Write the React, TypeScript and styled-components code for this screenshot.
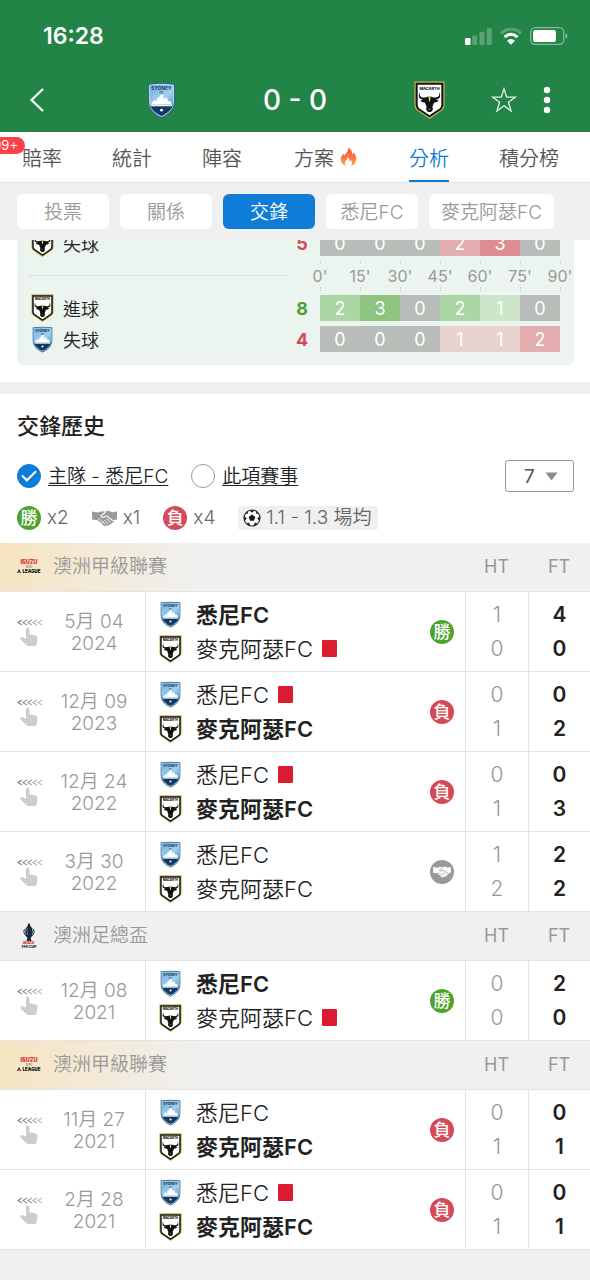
import React, { useState } from 'react';
import styled, { createGlobalStyle } from 'styled-components';

const GlobalStyle = createGlobalStyle`
  *, *::before, *::after { box-sizing: border-box; }
  body {
    margin: 0;
    background: #f0f0f0;
    color: #222;
    font-family: Inter, "Noto Sans CJK TC", sans-serif;
  }
  button, select, input { font: inherit; margin: 0; }
  button { border: 0; padding: 0; background: none; color: inherit; cursor: pointer; }
  svg { display: block; flex: none; }
`;

/* ---------- drawings ---------- */

const SydneyCrest = ({ width, height }: { width: number; height: number }) => (
  <svg width={width} height={height} viewBox="0 0 30 38" aria-hidden="true">
    <defs>
      <linearGradient id="sky" x1="0" y1="0" x2="1" y2="1">
        <stop offset="0" stopColor="#6db1e0" />
        <stop offset="0.6" stopColor="#a3d0ef" />
        <stop offset="1" stopColor="#5a9fd4" />
      </linearGradient>
    </defs>
    <path d="M1 2Q15-.5 29 2V20C29 29 22 34 15 37.5C8 34 1 29 1 20Z" fill="#2c5c88" />
    <path d="M2 2.8Q15 .6 28 2.8V20C28 28.4 21.500 33.200 15 36.400C8.500 33.200 2 28.400 2 20Z" fill="#b9d6ea" />
    <path d="M3 3.600Q15 1.600 27 3.600V25H3Z" fill="url(#sky)" />
    <path d="M3.200 23.500H26.800C25.500 29 20.500 32.400 15 35.200C9.500 32.400 4.500 29 3.200 23.500Z" fill="#12395f" />
    <path d="M4.500 23C5 20.500 7 19 8.500 18.500C8.500 19.300 9 19.800 9.500 20C9.500 17.500 11 16 13 15.300C13 13.500 15 12.300 17 12C16.500 14 17 16 18 17.500C18.500 16.500 19.500 16 21 15.800C20.500 17.500 21.500 19 22.500 20C23 19.600 23.500 19.500 24.500 19.500C24.500 21 25 22.300 25.500 23Z" fill="#fff" />
    <path d="M4 23H26V25H4Z" fill="#e6f2fa" />
    <circle cx="15" cy="29" r="1.500" fill="#fff" />
    <text x="15" y="8.600" fontSize="5" fontWeight="700" textAnchor="middle" fill="#163b5e">SYDNEY</text>
    <text x="15" y="12" fontSize="3" fontWeight="700" textAnchor="middle" fill="#163b5e">FC</text>
  </svg>
);

const MacarthurCrest = ({ width, height }: { width: number; height: number }) => (
  <svg width={width} height={height} viewBox="0 0 32 39" aria-hidden="true">
    <path d="M.500 .500H31.500V25Q31.500 28 29 30L16 39L3 30Q.500 28 .500 25Z" fill="#cdb64f" />
    <path d="M1.700 1.700H30.300V25Q30.300 27.500 28.200 29.200L16 37.500L3.800 29.200Q1.700 27.500 1.700 25Z" fill="#151515" />
    <path d="M3.800 3.800H28.200V24.500Q28.200 26.700 26.700 27.900L16 35.200L5.300 27.900Q3.800 26.700 3.800 24.500Z" fill="#fff" />
    <text x="16" y="8.800" fontSize="4" fontWeight="800" textAnchor="middle" fill="#151515">MACARTH</text>
    <path d="M6.500 11C4.500 16 8 17.500 12 16.800Q13.500 16 16 16T20 16.800C24 17.500 27.500 16 25.500 11C29 16 26 19 22.500 19L25.500 20Q23.500 22.500 20.800 22L19 26.500L19.500 29.500L17.500 32H14.500L12.500 29.500L13 26.500L11.200 22Q8.500 22.500 6.500 20L9.500 19C6 19 3 16 6.500 11Z" fill="#111" />
    <path d="M14.800 15.500H17.200L16.500 21H15.500Z" fill="#e2cb79" />
    <path d="M14.300 28.500H17.700L16 30Z" fill="#777" />
  </svg>
);

const ALeagueLogo = () => (
  <svg width="24" height="16" viewBox="0 0 24 16" aria-hidden="true">
    <text x="12" y="5" fontSize="5.500" fontWeight="900" textAnchor="middle" fill="#dd3433">ISUZU</text>
    <text x="12" y="8.500" fontSize="3" fontWeight="600" textAnchor="middle" fill="#666">UTE</text>
    <path d="M0 14L2 10L4 14H2.800L2 12L1.200 14Z" fill="#151515" />
    <text x="14.500" y="14" fontSize="4.500" fontWeight="900" textAnchor="middle" fill="#151515">LEAGUE</text>
  </svg>
);

const CupLogo = () => (
  <svg width="24" height="26" viewBox="0 0 24 26" aria-hidden="true">
    <path d="M11 1Q12-.500 13 1L13.400 3Q16 5 15.800 9Q15.500 13 13.600 15L14.500 18H9.500L10.400 15Q8.500 13 8.200 9Q8 5 10.600 3Z" fill="#1b2b3d" />
    <path d="M8.300 6Q6.200 6.500 7 9.500Q7.500 12 9.500 13M15.700 6Q17.800 6.500 17 9.500Q16.500 12 14.500 13" fill="none" stroke="#1b2b3d" strokeWidth="1" />
    <path d="M10.500 5Q9.500 8 10.700 12" stroke="#56738c" fill="none" />
    <text x="11.500" y="21" fontSize="4" fontWeight="900" fontStyle="italic" textAnchor="middle" fill="#d8333a">Isuzu</text>
    <text x="12" y="25" fontSize="3.500" fontWeight="900" textAnchor="middle" fill="#1b2b3d">FFA CUP</text>
  </svg>
);

const SwipeHand = () => (
  <svg width="26" height="28" viewBox="0 0 26 28" aria-hidden="true">
    <g fill="none" strokeWidth="1.300">
      <path d="M5 1L1 3.500L5 6" stroke="#8f8f8f" />
      <path d="M10 1L6 3.500L10 6" stroke="#9a9a9a" />
      <path d="M15 1L11 3.500L15 6" stroke="#a6a6a6" />
      <path d="M20 1L16 3.500L20 6" stroke="#b4b4b4" />
      <path d="M25 1L21 3.500L25 6" stroke="#c2c2c2" />
    </g>
    <path d="M9 10.500Q9 8.500 10.700 8.500T12.400 10.500V15.200L18.700 16.400Q20.700 16.900 20.500 19L19.800 24.500Q19.500 27 17.500 27H11.500Q10 27 9 25.800L3.500 20.200Q3 19.300 4 18.500Q5 17.800 6.200 18.300L9 19.800Z" fill="#cdcdcd" />
  </svg>
);

const Handshake = ({ width, height, color, line }: { width: number; height: number; color: string; line: string }) => (
  <svg width={width} height={height} viewBox="0 0 25 17" aria-hidden="true">
    <path d="M0 1.500L6 2.500L10 1.200L13 1.800L16.500.700L20 2.300L25 1.500V9.500L22 10Q22.500 12.300 20.300 12.500Q19.800 14.500 17.800 14.200Q16.800 16 15 15.200Q13.500 16.800 11.800 15.500L5.500 10.200L0 9.500Z" fill={color} />
    <path d="M13.500 2.300L9 5.800Q9.300 8 12 7L14.500 5.800L21.500 11" fill="none" stroke={line} strokeWidth="1.100" />
    <path d="M14.500 8.500L18.500 12M12.500 10L16 13.500M10.500 11.500L13.500 14.500" fill="none" stroke={line} strokeWidth="0.900" />
    <path d="M5.200 10.500L8 8.300M6.800 12.500L9.800 9.800M9 14L11.500 11.500" fill="none" stroke={line} strokeWidth="0.800" />
  </svg>
);

const FootballIcon = () => (
  <svg width="18" height="18" viewBox="0 0 18 18" aria-hidden="true">
    <circle cx="9" cy="9" r="8" fill="#fff" stroke="#333" strokeWidth="1.200" />
    <path d="M9 5.600L12.300 8L11 11.800H7L5.700 8Z" fill="#1c1c1c" />
    <path d="M5.800 1.300H12.200L9 3.600ZM17.300 7L16.500 12.300L14.200 9.200ZM.700 7L1.500 12.300L3.800 9.200ZM15.800 4.500L13 2L13.200 4.800ZM2.200 4.500L5 2L4.800 4.800ZM14.800 14.700L10.500 17L11.900 13.600ZM3.200 14.700L7.500 17L6.100 13.600Z" fill="#1c1c1c" />
  </svg>
);

const FireIcon = () => (
  <svg width="17" height="20" viewBox="0 0 17 20" aria-hidden="true">
    <defs>
      <linearGradient id="flame" x1="0" y1="0" x2="0" y2="1">
        <stop offset="0" stopColor="#f9564f" />
        <stop offset="0.6" stopColor="#fb7a45" />
        <stop offset="1" stopColor="#fdb13c" />
      </linearGradient>
    </defs>
    <path d="M8.200.500C11.500 2.500 12.300 5 12.300 7.500Q13.300 6.800 13.600 5.200C15.500 7.500 16.500 10 16.200 12.500C16 15.500 14.200 17.800 11.200 19C12.500 16.800 12.200 14.500 10.500 13Q10.300 14 9.500 14.500Q9.600 11.500 7.800 10C7.500 12.200 5 13.500 5 16Q5 17.700 6.200 19C3 18 .800 15.800 .700 12.500C.600 10 2 8.300 3 6.500Q3.500 7.500 4.300 8.200C6 6.200 8.800 4.200 8.200.500Z" fill="url(#flame)" />
  </svg>
);

const BackIcon = () => (
  <svg width="16" height="26" viewBox="0 0 16 26" aria-hidden="true">
    <path d="M14 2L2.500 13L14 24" fill="none" stroke="#fff" strokeWidth="2.200" />
  </svg>
);

const StarIcon = () => (
  <svg width="26" height="26" viewBox="0 0 26 26" aria-hidden="true">
    <path d="M13 1.800L15.700 10.100H24.500L17.400 15.200L20.100 24L13 18.700L5.900 24L8.600 15.200L1.500 10.100H10.300Z" fill="none" stroke="#e4f1e8" strokeWidth="1.300" />
  </svg>
);

const DotsIcon = () => (
  <svg width="8" height="28" viewBox="0 0 8 28" fill="#fff" aria-hidden="true">
    <circle cx="4" cy="4" r="3.200" />
    <circle cx="4" cy="14" r="3.200" />
    <circle cx="4" cy="24" r="3.200" />
  </svg>
);

const SignalIcon = () => (
  <svg width="27" height="17" viewBox="0 0 27 17" fill="#fff" aria-hidden="true">
    <rect x="0" y="10" width="5.500" height="7" rx="1.200" />
    <g opacity="0.25">
      <rect x="7.200" y="7.500" width="5" height="9.500" rx="1.200" />
      <rect x="14.500" y="4" width="5" height="13" rx="1.200" />
      <rect x="21.800" y="0" width="5" height="17" rx="1.200" />
    </g>
  </svg>
);

const WifiIcon = () => (
  <svg width="22" height="17" viewBox="0 0 22 17" aria-hidden="true">
    <path d="M1 5.300Q11-3.500 21 5.300" fill="none" stroke="#fff" strokeOpacity="0.25" strokeWidth="3" />
    <path d="M4.600 9.200Q11 3.300 17.400 9.200" fill="none" stroke="#fff" strokeWidth="3" />
    <path d="M11 16.800L7 12.700Q11 9.300 15 12.700Z" fill="#fff" />
  </svg>
);

const BatteryIcon = () => (
  <svg width="38" height="18" viewBox="0 0 38 18" aria-hidden="true">
    <rect x="0.700" y="0.700" width="33" height="16.600" rx="4.500" fill="none" stroke="#fff" strokeOpacity="0.45" strokeWidth="1.300" />
    <rect x="3" y="3" width="23" height="12" rx="2.500" fill="#fff" />
    <path d="M35.500 6Q37.500 7 37.500 9T35.500 12Z" fill="#fff" fillOpacity="0.5" />
  </svg>
);

/* ---------- top bars ---------- */

const TopBars = styled.div`
  position: sticky;
  top: 0;
  z-index: 2;
`;

const StatusBar = styled.div`
  display: flex;
  justify-content: space-between;
  align-items: center;
  height: 72px;
  padding: 0 22px 0 43px;
  background: #228446;
  color: #fff;
  font-size: 23px;
  font-weight: 600;
`;

const StatusIcons = styled.div`
  display: flex;
  align-items: center;
  gap: 8px;
`;

const MatchHeader = styled.header`
  display: flex;
  align-items: center;
  justify-content: space-between;
  height: 60px;
  padding: 0 39px 4px 29px;
  background: #228446;
  color: #fff;
`;

const HeaderSide = styled.div<{ $end?: boolean }>`
  display: flex;
  flex: 1 1 0;
  align-items: center;
  justify-content: ${p => (p.$end ? 'flex-end' : 'flex-start')};
  gap: 26px;
`;

const ScoreGroup = styled.div`
  display: flex;
  align-items: center;
  justify-content: space-between;
  flex: 0 1 298px;
  margin-left: 12px;
`;

const Score = styled.h1`
  margin: 0;
  font-size: 28px;
  font-weight: 500;
  line-height: 36px;
`;

const Tabs = styled.nav`
  display: flex;
  gap: 50px;
  height: 51px;
  padding-left: 22px;
  overflow: hidden;
  background: #fff;
  border-bottom: 1px solid #e4e4e4;
`;

const Tab = styled.button<{ $active?: boolean; $wide?: boolean }>`
  position: relative;
  display: flex;
  flex: none;
  align-items: center;
  gap: 6px;
  padding: ${p => (p.$wide ? '2px 2px 0' : '2px 0 0')};
  border-bottom: 2px solid ${p => (p.$active ? '#0f7dd8' : 'transparent')};
  color: ${p => (p.$active ? '#0f7dd8' : '#555')};
  font-size: 20px;
  font-weight: 350;
`;

const CountBadge = styled.span`
  position: absolute;
  top: 5px;
  left: -31px;
  width: 34px;
  height: 17px;
  padding-right: 7px;
  border-radius: 9px;
  background: #fc4148;
  color: #fff;
  font-size: 13px;
  font-weight: 400;
  line-height: 17px;
  text-align: right;
`;

const Chips = styled.div`
  display: flex;
  gap: 11px;
  padding: 11px 17px;
  background: #f0f0f0;
`;

const Chip = styled.button<{ $active?: boolean }>`
  flex: none;
  min-width: 92px;
  height: 35px;
  padding: 0 12px;
  border-radius: 6px;
  background: ${p => (p.$active ? '#0f7dd8' : '#fff')};
  color: ${p => (p.$active ? '#fff' : '#999')};
  font-size: 19px;
  font-weight: 350;
  line-height: 37px;
`;

/* ---------- goal timing panel ---------- */

const TimingSection = styled.section`
  margin-top: -10px;
  padding: 0 16px 17px 17px;
  background: #fff;
`;

const TimingPanel = styled.div`
  padding: 0 14px 13px 12px;
  border-radius: 0 0 6px 6px;
  background: #ebf4ef;
`;

const TimingRow = styled.div`
  display: flex;
  align-items: center;
  height: 26px;
  & + & { margin-top: 5px; }
`;

const CrestSlot = styled.span`
  display: flex;
  flex: none;
  justify-content: center;
  width: 24px;
`;

const TimingLabel = styled.span`
  flex: 1;
  display: flex;
  align-items: center;
  gap: 9px;
  padding-left: 1px;
  font-size: 18px;
  font-weight: 350;
`;

const Total = styled.strong<{ $good?: boolean }>`
  width: 36px;
  color: ${p => (p.$good ? '#4c9f35' : '#d44a57')};
  font-size: 18px;
  font-weight: 700;
  text-align: center;
`;

const Bar = styled.div`
  display: flex;
`;

const barColors = {
  none: '#b8bdba',
  g1: '#cde6c9',
  g2: '#abd6a3',
  g3: '#8ec47f',
  r1: '#e8d2cf',
  r2: '#e3adb0',
  r3: '#df8d93',
};

const BarCell = styled.span<{ $tone: keyof typeof barColors }>`
  width: 40px;
  height: 26px;
  background: ${p => barColors[p.$tone]};
  color: #fff;
  font-size: 18px;
  line-height: 28px;
  text-align: center;
`;

const Axis = styled.div`
  display: flex;
  align-items: center;
  height: 39px;
`;

const AxisRule = styled.hr`
  flex: 1;
  margin: 0 11px 0 0;
  border: 0;
  border-top: 1px solid #dcdfdd;
`;

const AxisLabels = styled.div`
  display: flex;
  margin-right: -20px;
`;

const AxisLabel = styled.span`
  display: flex;
  flex-direction: column;
  align-items: center;
  justify-content: space-between;
  width: 40px;
  height: 31px;
  color: #999;
  font-size: 16px;
  line-height: 22px;
  &::before, &::after {
    content: '';
    height: 4px;
    border-left: 1px dotted #c9cfcc;
  }
`;

/* ---------- head-to-head history ---------- */

const History = styled.section`
  margin-top: 12px;
  background: #fff;
`;

const HistoryTop = styled.div`
  padding: 16px 16px 12px 17px;
`;

const Title = styled.h2`
  margin: 0;
  font-size: 22px;
  font-weight: 500;
  line-height: 32px;
`;

const Filters = styled.div`
  display: flex;
  align-items: center;
  gap: 23px;
  margin-top: 18px;
`;

const Option = styled.label`
  display: flex;
  align-items: center;
  gap: 7px;
  font-size: 19px;
  font-weight: 350;
  line-height: 26px;
  cursor: pointer;
`;

const OptionText = styled.span`
  padding-top: 2px;
  text-decoration: underline;
  text-decoration-thickness: 1px;
  text-underline-offset: 2px;
`;

const Check = styled.input`
  display: grid;
  place-items: center;
  width: 24px;
  height: 24px;
  appearance: none;
  border: 1px solid #999;
  border-radius: 50%;
  background: #fff;
  &:checked {
    border-color: #0f7dd8;
    background: #0f7dd8;
  }
  &:checked::after {
    content: '';
    width: 14px;
    height: 8px;
    margin-bottom: 4px;
    border-left: 2px solid #fff;
    border-bottom: 2px solid #fff;
    transform: rotate(-45deg);
  }
`;

const SelectBox = styled.div`
  display: grid;
  align-items: center;
  width: 69px;
  margin-left: auto;
  & > * { grid-area: 1 / 1; }
  & > svg { justify-self: end; margin-right: 16px; pointer-events: none; }
`;

const Select = styled.select`
  width: 100%;
  height: 32px;
  padding: 0 0 0 18px;
  appearance: none;
  border: 1px solid #999;
  border-radius: 3px;
  background: #fff;
  color: #555;
  font-size: 19px;
`;

const Stats = styled.div`
  display: flex;
  align-items: center;
  gap: 23px;
  height: 26px;
  margin-top: 13px;
  color: #666;
  font-size: 19px;
  font-weight: 350;
  line-height: 24px;
`;

const Stat = styled.span`
  display: flex;
  align-items: center;
  gap: 6px;
`;

const Average = styled.span`
  display: flex;
  align-items: center;
  gap: 5px;
  height: 24px;
  padding: 0 6px 0 5px;
  border-radius: 3px;
  background: #f0f0f0;
  white-space: nowrap;
`;

const resultColors = { win: '#4ca32d', loss: '#d64a57', draw: '#999' };
type Outcome = keyof typeof resultColors;

const ResultCircle = styled.span<{ $kind: Outcome }>`
  display: flex;
  flex: none;
  align-items: center;
  justify-content: center;
  width: 24px;
  height: 24px;
  border-radius: 50%;
  background: ${p => resultColors[p.$kind]};
  color: #fff;
  font-size: 17px;
  font-weight: 500;
  line-height: 24px;
`;

const Table = styled.table`
  width: 100%;
  table-layout: fixed;
  border-spacing: 0;
`;

const DateCol = styled.col`width: 145px;`;
const HalfCol = styled.col`width: 63px;`;
const FullCol = styled.col`width: 62px;`;

const LeagueCell = styled.th<{ $gold?: boolean }>`
  height: 49px;
  padding: 0 0 0 17px;
  border-bottom: 1px solid #e4e4e4;
  background: ${p => (p.$gold ? 'linear-gradient(100deg, #f6e4c0 0, #f0f0f0 200px)' : '#f0f0f0')};
  text-align: left;
`;

const League = styled.div`
  display: flex;
  align-items: center;
  gap: 12px;
  color: #999;
  font-size: 19px;
  font-weight: 350;
  line-height: 24px;
`;

const ColumnHead = styled.th`
  padding: 0;
  border-bottom: 1px solid #e4e4e4;
  background: #f0f0f0;
  color: #999;
  font-size: 18px;
  font-weight: 400;
  line-height: 24px;
`;

const Cell = styled.td`
  height: 80px;
  padding: 0;
  border-bottom: 1px solid #e4e4e4;
  & + & { border-left: 1px solid #e4e4e4; }
`;

const DateBox = styled.div`
  display: flex;
  align-items: center;
  gap: 8px;
  padding: 2px 8px 0 17px;
`;

const DateText = styled.div`
  flex: 1;
  color: #999;
  font-size: 19px;
  font-weight: 350;
  line-height: 22px;
  text-align: center;
`;

const Match = styled.div`
  display: flex;
  align-items: center;
  justify-content: space-between;
  padding: 0 11px 0 12px;
`;

const Team = styled.div<{ $winner?: boolean }>`
  display: flex;
  align-items: center;
  height: 34px;
  gap: 14px;
  font-size: 22px;
  font-weight: ${p => (p.$winner ? 600 : 350)};
  line-height: 34px;
  white-space: nowrap;
`;

const TeamName = styled.span`
  display: flex;
  align-items: center;
  gap: 9px;
`;

const RedCard = styled.span`
  width: 15px;
  height: 17px;
  border-radius: 1px;
  background: #dd1b30;
`;

const Goals = styled.div<{ $final?: boolean }>`
  color: ${p => (p.$final ? '#222' : '#999')};
  font-size: 21px;
  font-weight: ${p => (p.$final ? 600 : 350)};
  line-height: 34px;
  text-align: center;
`;

const Result = ({ kind }: { kind: Outcome }) => (
  <ResultCircle $kind={kind}>
    {kind === 'win' ? '勝' : kind === 'loss' ? '負' : <Handshake width={18} height={12} color="#fff" line="#999" />}
  </ResultCircle>
);

const Crest = ({ team }: { team: 'syd' | 'mac' }) => (
  <CrestSlot>
    {team === 'syd' ? <SydneyCrest width={21} height={27} /> : <MacarthurCrest width={23} height={28} />}
  </CrestSlot>
);

/* ---------- data ---------- */

interface MatchData {
  day: string;
  year: string;
  card?: 'home' | 'away';
  result: Outcome;
  ht: [number, number];
  ft: [number, number];
}

interface LeagueGroup {
  name: string;
  gold: boolean;
  matches: MatchData[];
}

const groups: LeagueGroup[] = [
  {
    name: '澳洲甲級聯賽',
    gold: true,
    matches: [
      { day: '5月 04', year: '2024', card: 'away', result: 'win', ht: [1, 0], ft: [4, 0] },
      { day: '12月 09', year: '2023', card: 'home', result: 'loss', ht: [0, 1], ft: [0, 2] },
      { day: '12月 24', year: '2022', card: 'home', result: 'loss', ht: [0, 1], ft: [0, 3] },
      { day: '3月 30', year: '2022', result: 'draw', ht: [1, 2], ft: [2, 2] },
    ],
  },
  {
    name: '澳洲足總盃',
    gold: false,
    matches: [{ day: '12月 08', year: '2021', card: 'away', result: 'win', ht: [0, 0], ft: [2, 0] }],
  },
  {
    name: '澳洲甲級聯賽',
    gold: true,
    matches: [
      { day: '11月 27', year: '2021', result: 'loss', ht: [0, 1], ft: [0, 1] },
      { day: '2月 28', year: '2021', card: 'home', result: 'loss', ht: [0, 1], ft: [0, 1] },
    ],
  },
];

interface TimingData {
  team: 'syd' | 'mac';
  label: string;
  good: boolean;
  goals: number[];
}

const timings: TimingData[] = [
  { team: 'mac', label: '失球', good: false, goals: [0, 0, 0, 2, 3, 0] },
  { team: 'mac', label: '進球', good: true, goals: [2, 3, 0, 2, 1, 0] },
  { team: 'syd', label: '失球', good: false, goals: [0, 0, 0, 1, 1, 2] },
];

const Timing = ({ team, label, good, goals }: TimingData) => (
  <TimingRow>
    <TimingLabel>
      <Crest team={team} />
      {label}
    </TimingLabel>
    <Total $good={good}>{goals.reduce((a, b) => a + b, 0)}</Total>
    <Bar>
      {goals.map((n, i) => (
        <BarCell key={i} $tone={(n === 0 ? 'none' : `${good ? 'g' : 'r'}${n}`) as keyof typeof barColors}>{n}</BarCell>
      ))}
    </Bar>
  </TimingRow>
);

const MatchRow = ({ match }: { match: MatchData }) => (
  <tr>
    <Cell>
      <DateBox>
        <SwipeHand />
        <DateText>
          {match.day}
          <br />
          {match.year}
        </DateText>
      </DateBox>
    </Cell>
    <Cell>
      <Match>
        <div>
          <Team $winner={match.ft[0] > match.ft[1]}>
            <Crest team="syd" />
            <TeamName>悉尼FC{match.card === 'home' && <RedCard />}</TeamName>
          </Team>
          <Team $winner={match.ft[1] > match.ft[0]}>
            <Crest team="mac" />
            <TeamName>麥克阿瑟FC{match.card === 'away' && <RedCard />}</TeamName>
          </Team>
        </div>
        <Result kind={match.result} />
      </Match>
    </Cell>
    <Cell>{match.ht.map((n, i) => <Goals key={i}>{n}</Goals>)}</Cell>
    <Cell>{match.ft.map((n, i) => <Goals key={i} $final>{n}</Goals>)}</Cell>
  </tr>
);

export default function App() {
  const [chip, setChip] = useState('交鋒');
  const [home, setHome] = useState(true);
  const [sameLeague, setSameLeague] = useState(false);

  return (
    <>
      <GlobalStyle />
      <TopBars>
        <StatusBar>
          <span>16:28</span>
          <StatusIcons>
            <SignalIcon />
            <WifiIcon />
            <BatteryIcon />
          </StatusIcons>
        </StatusBar>
        <MatchHeader>
          <HeaderSide>
            <button aria-label="返回"><BackIcon /></button>
          </HeaderSide>
          <ScoreGroup>
            <SydneyCrest width={29} height={37} />
            <Score>0 - 0</Score>
            <MacarthurCrest width={31} height={38} />
          </ScoreGroup>
          <HeaderSide $end>
            <button aria-label="收藏"><StarIcon /></button>
            <button aria-label="更多"><DotsIcon /></button>
          </HeaderSide>
        </MatchHeader>
        <Tabs>
          <Tab>賠率<CountBadge>99+</CountBadge></Tab>
          <Tab>統計</Tab>
          <Tab>陣容</Tab>
          <Tab $wide>方案<FireIcon /></Tab>
          <Tab $active>分析</Tab>
          <Tab>積分榜</Tab>
        </Tabs>
        <Chips>
          {['投票', '關係', '交鋒', '悉尼FC', '麥克阿瑟FC'].map(name => (
            <Chip key={name} $active={chip === name} onClick={() => setChip(name)}>{name}</Chip>
          ))}
        </Chips>
      </TopBars>

      <TimingSection>
        <TimingPanel>
          <Timing {...timings[0]} />
          <Axis>
            <AxisRule />
            <AxisLabels>
              {[0, 15, 30, 45, 60, 75, 90].map(m => <AxisLabel key={m}>{m}'</AxisLabel>)}
            </AxisLabels>
          </Axis>
          <Timing {...timings[1]} />
          <Timing {...timings[2]} />
        </TimingPanel>
      </TimingSection>

      <History>
        <HistoryTop>
          <Title>交鋒歷史</Title>
          <Filters>
            <Option>
              <Check type="checkbox" checked={home} onChange={e => setHome(e.target.checked)} />
              <OptionText>主隊 - 悉尼FC</OptionText>
            </Option>
            <Option>
              <Check type="checkbox" checked={sameLeague} onChange={e => setSameLeague(e.target.checked)} />
              <OptionText>此項賽事</OptionText>
            </Option>
            <SelectBox>
              <Select aria-label="場數" defaultValue="7">
                <option>7</option>
                <option>10</option>
                <option>20</option>
              </Select>
              <svg width="13" height="9" viewBox="0 0 13 9" aria-hidden="true">
                <path d="M0.500 0.500H12.500L6.500 8.500Z" fill="#8c8c8c" />
              </svg>
            </SelectBox>
          </Filters>
          <Stats>
            <Stat><Result kind="win" />x2</Stat>
            <Stat><Handshake width={25} height={17} color="#999" line="#fff" />x1</Stat>
            <Stat><Result kind="loss" />x4</Stat>
            <Average><FootballIcon />1.1 - 1.3 場均</Average>
          </Stats>
        </HistoryTop>
        <Table>
          <colgroup>
            <DateCol />
            <col />
            <HalfCol />
            <FullCol />
          </colgroup>
          {groups.map((group, g) => (
            <tbody key={g}>
              <tr>
                <LeagueCell colSpan={2} $gold={group.gold}>
                  <League>
                    {group.gold ? <ALeagueLogo /> : <CupLogo />}
                    {group.name}
                  </League>
                </LeagueCell>
                <ColumnHead>HT</ColumnHead>
                <ColumnHead>FT</ColumnHead>
              </tr>
              {group.matches.map(match => <MatchRow key={match.day + match.year} match={match} />)}
            </tbody>
          ))}
        </Table>
      </History>
    </>
  );
}
